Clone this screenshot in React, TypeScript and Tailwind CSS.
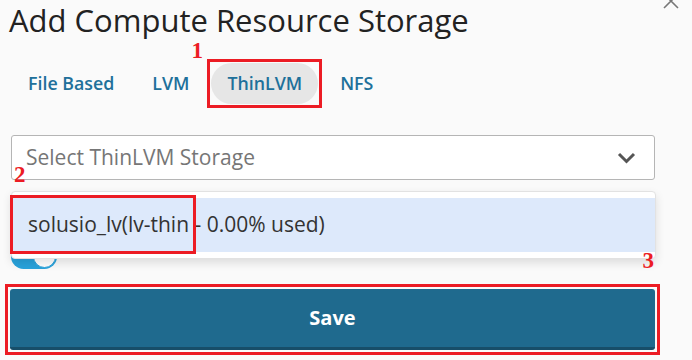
import React from "react"

const tabs = ["File Based", "LVM", "ThinLVM", "NFS"]

// red numbered marker from the screenshot annotations
const Mark = ({ n, className }: { n: string; className: string }) => (
    <span className={"absolute font-['Liberation_Serif',serif] font-bold text-[23px] leading-none text-[#ec1c24] " + className}>{n}</span>
)

export default function App() {
    return (
        <div className="relative w-[692px] h-[360px] overflow-hidden bg-[#fafafa] font-['Open_Sans',sans-serif]">
            {/* close icon, cut off by the top edge */}
            <svg className="absolute left-[662px] top-[-8px]" width="18" height="18" viewBox="0 0 18 18">
                <path d="M2 2 L16 16 M16 2 L2 16" stroke="#777" strokeWidth="1.6" fill="none" />
            </svg>

            <div className="flex flex-col px-[11px] pt-[2px]">
                <h1 className="text-[31px] leading-[36px] text-[#222] ml-[-2px]">Add Compute Resource Storage</h1>

                <div className="flex gap-[6px] mt-[25px] ml-[1px]">
                    {tabs.map(t => (
                        <div key={t} className="relative">
                            <div className={"h-[41px] px-4 flex items-center rounded-full text-[17.8px] font-semibold text-[#20709a] " + (t === "ThinLVM" ? "bg-[#e6e6e6]" : "")}>
                                {t}
                            </div>
                            {t === "ThinLVM" && (
                                <>
                                    <div className="absolute -inset-[4px] border-[3px] border-[#ec1c24]" />
                                    <Mark n="1" className="left-[-20px] top-[-24px]" />
                                </>
                            )}
                        </div>
                    ))}
                </div>

                <div className="relative flex flex-col mt-[31px] mr-[26px]">
                    <div className="h-[45px] flex items-center justify-between bg-white border border-[#b5b5b5] rounded-[3px] pl-[14px] pr-[18px]">
                        <span className="text-[21px] text-[#767676]">Select ThinLVM Storage</span>
                        <svg width="19" height="12" viewBox="0 0 19 12">
                            <path d="M2 2 L9.5 9.5 L17 2" stroke="#555" strokeWidth="3" fill="none" />
                        </svg>
                    </div>
                    <Mark n="2" className="left-[3px] top-[28px]" />

                    {/* toggle partly hidden under the open menu */}
                    <div className="mt-[64px] w-[46px] h-[25px] rounded-full bg-[#29a3dc] flex items-center justify-end p-[1px]">
                        <div className="w-[23px] h-[23px] rounded-full bg-white border border-[#29a3dc]" />
                    </div>

                    {/* open dropdown menu */}
                    <div className="absolute left-0 right-[-1px] top-[56px] bg-white rounded-[4px] border border-[#e2e2e2] shadow-[0_4px_10px_rgba(0,0,0,0.12)] py-[6px]">
                        <div className="relative h-[54px] flex items-center bg-[#dde9fb] pl-[16px] text-[21px] text-[#333]">
                            solusio_lv(lv-thin - 0.00% used)
                            <div className="absolute left-[-2px] top-[-3px] w-[186px] h-[59px] border-[3px] border-[#ec1c24]" />
                        </div>
                    </div>
                    <Mark n="3" className="right-[1px] top-[114px]" />
                </div>

                <div className="relative mt-[20px] mr-[26px] ml-[-1px]">
                    <button className="w-full h-[61px] rounded-[3px] bg-[#1f6a8e] border-b-[3px] border-[#174e69] text-white text-[20px] font-bold">
                        Save
                    </button>
                    <div className="absolute -inset-[5px] border-[3px] border-[#ec1c24]" />
                </div>
            </div>
        </div>
    )
}
